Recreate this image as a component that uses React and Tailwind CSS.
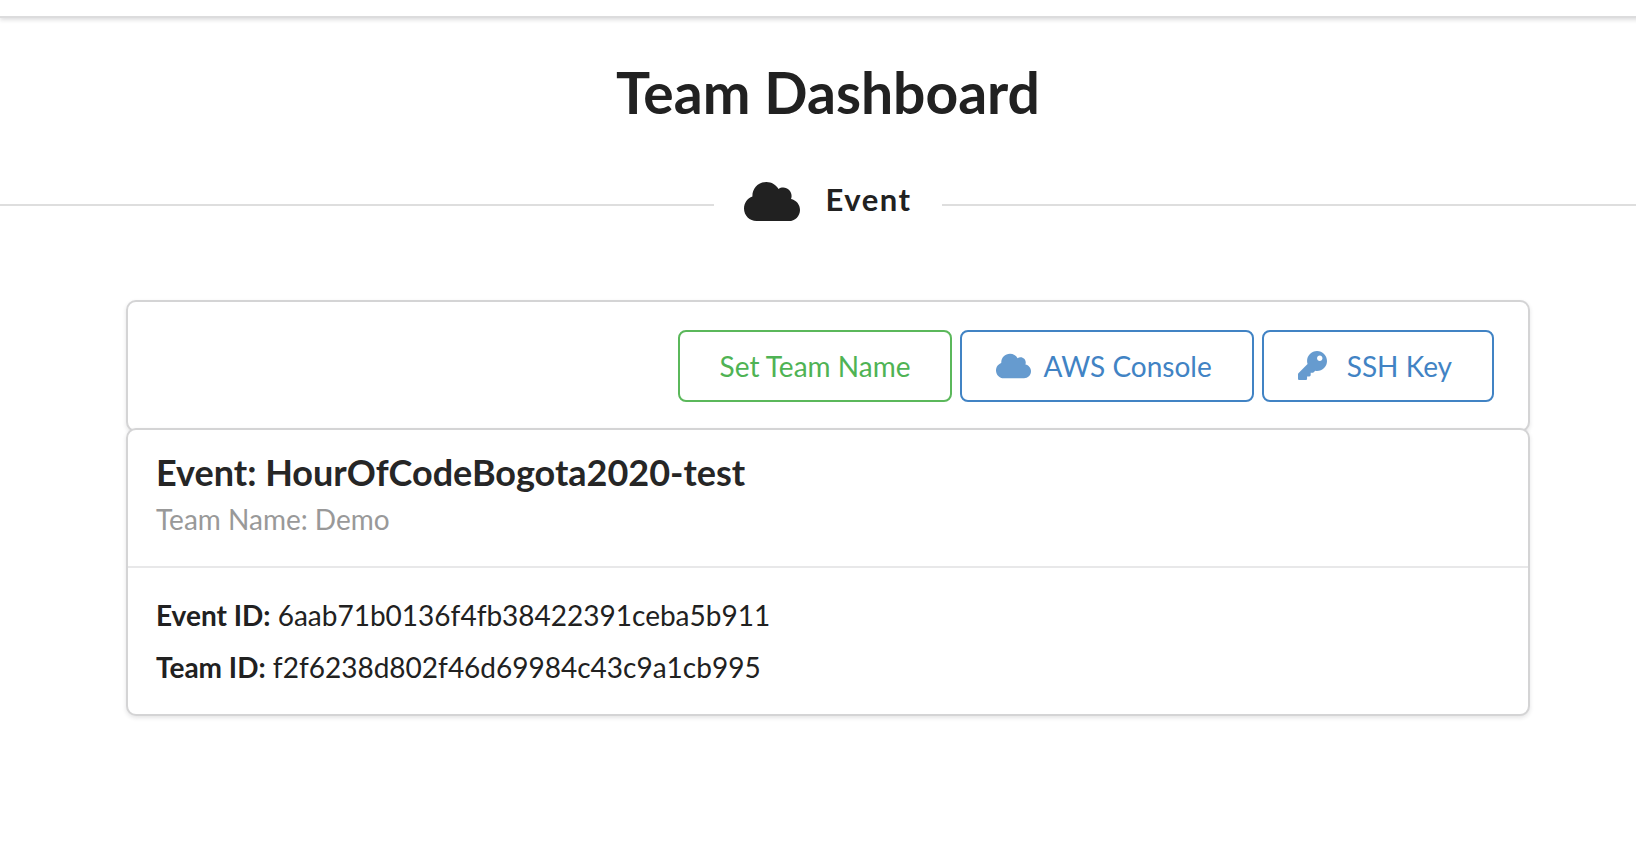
import { FaCloud, FaKey } from "react-icons/fa";

const buttonBase =
  "flex h-[72px] cursor-pointer items-center rounded-lg border-2 bg-white pr-10 pb-px text-[28px] leading-7";
const blueButton = `${buttonBase} border-[#4183c4] pl-[34px] text-[#4183c4]`;

function Card({ className = "", children }) {
  return (
    <section
      className={`rounded-[10px] border-2 border-[#d4d4d5] bg-white shadow-[0_2px_4px_0_rgba(34,36,38,0.12)] ${className}`}
    >
      {children}
    </section>
  );
}

function Detail({ label, value }) {
  return (
    <div>
      <dt className="inline font-bold">{label}:</dt> <dd className="inline">{value}</dd>
    </div>
  );
}

export default function App() {
  return (
    <div className="min-h-screen overflow-x-hidden bg-white font-['Lato','Open_Sans',sans-serif] text-[#212121] [font-variant-ligatures:none]">
      <div className="-mr-5">
        <header className="h-[18px] border-b-2 border-[#dcdcdd] bg-white shadow-[0_2px_4px_0_rgba(34,36,38,0.15)]" />
        <main className="pt-[38px]">
          <h1 className="text-center text-[57px] leading-[72px] font-bold">Team Dashboard</h1>

          <div className="mt-[50px] flex h-[46px] items-center">
            <div className="mt-2 h-[2px] flex-1 bg-[#dedede]" />
            <h2 className="flex items-center gap-[25px] px-[30px] text-[31px] leading-10 font-bold tracking-wider">
              <FaCloud className="h-[45px] w-14" aria-hidden="true" />
              <span className="pb-1">Event</span>
            </h2>
            <div className="mt-2 h-[2px] flex-1 bg-[#dedede]" />
          </div>

          <div className="mt-[76px] pr-[126px] pl-[126px]">
            <Card className="-mb-1 flex justify-end gap-2 py-7 pr-[34px]">
              <button type="button" className={`${buttonBase} border-[#5bb85b] pl-10 text-[#4fb354]`}>
                Set Team Name
              </button>
              <button type="button" className={blueButton}>
                <FaCloud className="mr-3 h-7 w-[35px] opacity-80" aria-hidden="true" />
                AWS Console
              </button>
              <button type="button" className={blueButton}>
                <FaKey className="mr-5 h-[29px] w-[29px] opacity-80" aria-hidden="true" />
                SSH Key
              </button>
            </Card>
            <Card className="relative">
              <div className="px-7 pt-5 pb-[27px]">
                <h3 className="text-[36px] leading-[44px] font-bold text-[#262626]">
                  Event: HourOfCodeBogota2020-test
                </h3>
                <p className="mt-[5px] text-[28px] leading-10 text-[#999999]">Team Name: Demo</p>
              </div>
              <dl className="flex flex-col gap-3 border-t-2 border-[#e8e8e9] px-7 py-[27px] text-[28px] leading-10">
                <Detail label="Event ID" value="6aab71b0136f4fb38422391ceba5b911" />
                <Detail label="Team ID" value="f2f6238d802f46d69984c43c9a1cb995" />
              </dl>
            </Card>
          </div>
        </main>
      </div>
    </div>
  );
}
